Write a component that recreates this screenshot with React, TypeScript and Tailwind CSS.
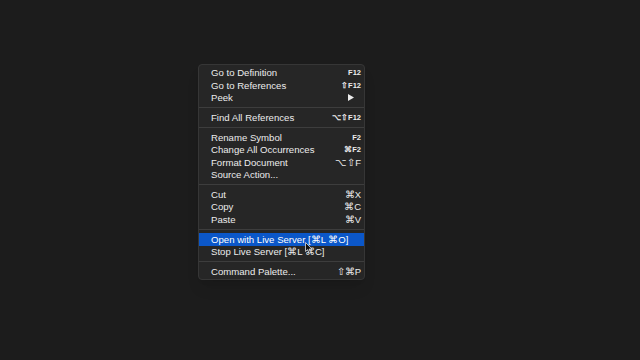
import React from "react";

type Item =
  | { sep: true }
  | { label: string; keys?: string; small?: boolean; active?: boolean; arrow?: boolean };

const items: Item[] = [
  { label: "Go to Definition", keys: "F12", small: true },
  { label: "Go to References", keys: "⇧F12", small: true },
  { label: "Peek", arrow: true },
  { sep: true },
  { label: "Find All References", keys: "⌥⇧F12", small: true },
  { sep: true },
  { label: "Rename Symbol", keys: "F2", small: true },
  { label: "Change All Occurrences", keys: "⌘F2", small: true },
  { label: "Format Document", keys: "⌥⇧F" },
  { label: "Source Action..." },
  { sep: true },
  { label: "Cut", keys: "⌘X" },
  { label: "Copy", keys: "⌘C" },
  { label: "Paste", keys: "⌘V" },
  { sep: true },
  { label: "Open with Live Server [⌘L ⌘O]", active: true },
  { label: "Stop Live Server [⌘L ⌘C]" },
  { sep: true },
  { label: "Command Palette...", keys: "⇧⌘P" },
];

export default function App() {
  return (
    <div
      className="w-[640px] h-[360px] bg-[#1c1c1c] pl-[198px] pt-[64px] overflow-hidden"
      style={{ fontFamily: "'Liberation Sans', Arial, sans-serif" }}
    >
      <div className="relative w-[167px] rounded-[4px] border border-[#363636] bg-[#262626] pt-[2px] pb-[1px] text-[#ececec] shadow-lg">
        {items.map((it, i) =>
          "sep" in it ? (
            <div key={i} className="h-[7.8px] flex items-center">
              <div className="h-px w-full bg-[#3d3d3d]" />
            </div>
          ) : (
            <div
              key={i}
              className={`h-[12.3px] flex items-center justify-between pl-[12px] pr-[3px] text-[9.6px] leading-none ${
                it.active ? "bg-[#0b57c9] text-white" : ""
              }`}
            >
              <span className="whitespace-nowrap">{it.label}</span>
              {it.arrow ? (
                <svg width="6" height="7" viewBox="0 0 6 7" className="mr-[7px]">
                  <path d="M0 0L6 3.5L0 7Z" fill="#ececec" />
                </svg>
              ) : it.keys ? (
                <span className={`whitespace-nowrap ${it.small ? "text-[7.5px] font-bold" : "text-[9.5px]"}`}>{it.keys}</span>
              ) : null}
            </div>
          )
        )}
        <svg
          width="8"
          height="12"
          viewBox="0 0 8 12"
          className="absolute left-[106px] top-[177px]"
        >
          <path d="M0.5 0.5L0.5 9.5L2.6 7.6L4.2 11.2L5.6 10.6L4.1 7.1L7 7Z" fill="#111" stroke="#ddd" strokeWidth="0.8" />
        </svg>
      </div>
    </div>
  );
}
